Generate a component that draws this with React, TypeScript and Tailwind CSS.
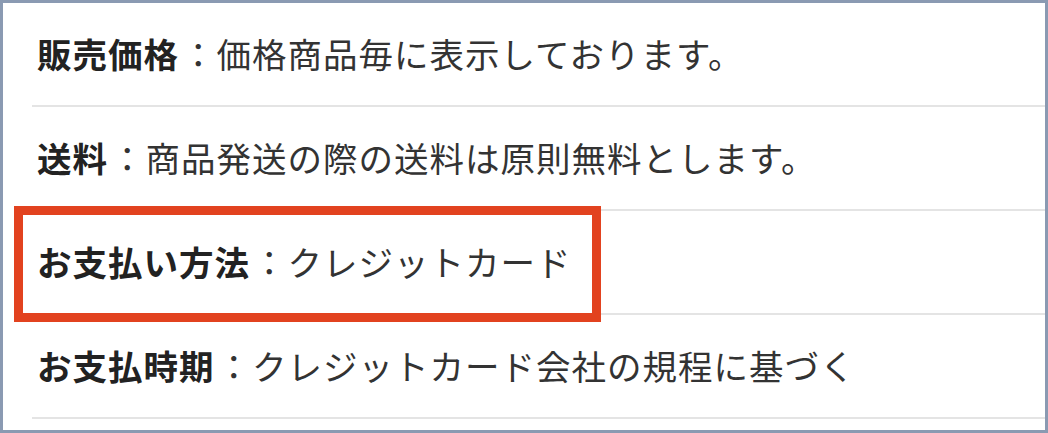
const rows = [
  { label: '販売価格', value: '価格商品毎に表示しております。' },
  { label: '送料', value: '商品発送の際の送料は原則無料とします。' },
  { label: 'お支払い方法', value: 'クレジットカード' },
  { label: 'お支払時期', value: 'クレジットカード会社の規程に基づく' },
];

export default function App() {
  return (
    <div
      className="relative h-[433px] w-[1048px] overflow-hidden border-[3px] border-[#8a9ab2] bg-white text-[#333]"
      style={{ fontFamily: '"Noto Sans CJK JP", "Noto Sans", sans-serif' }}
    >
      <ul className="flex flex-col pl-[29px]">
        {rows.map((row) => (
          <li
            key={row.label}
            className="flex h-[104px] items-center border-b-2 border-[#e4e4e4] pl-[5px] pb-[2px] text-[34.5px] leading-none tracking-[1px]"
          >
            <span className="font-bold text-[#222]">{row.label}</span>
            <span className="pl-[2px]">：</span>
            <span>{row.value}</span>
          </li>
        ))}
      </ul>
      {/* annotation highlight */}
      <div className="absolute left-[11px] top-[203px] h-[116px] w-[587px] border-[9px] border-[#e2421f]" />
    </div>
  );
}
